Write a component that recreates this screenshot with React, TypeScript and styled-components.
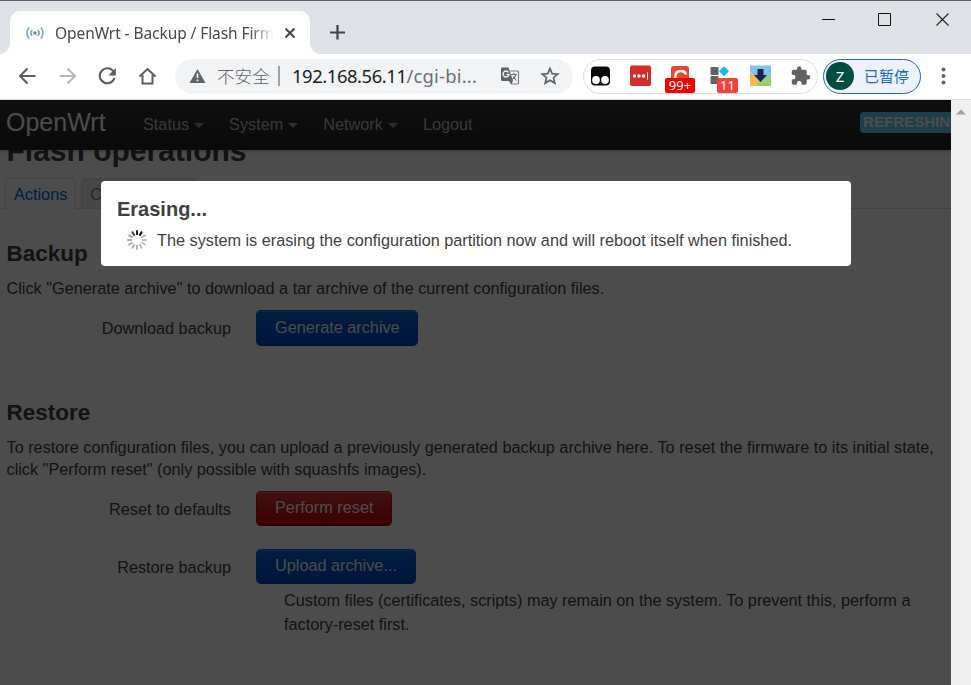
import React from "react";
import styled, { createGlobalStyle, css } from "styled-components";

const GlobalStyle = createGlobalStyle`
  * { box-sizing: border-box; }
  html, body, #root { margin: 0; height: 100%; }
  body { overflow: hidden; }
  svg { display: block; flex: none; }
`;

const chromeFont = css`
  font-family: "Noto Sans", "Noto Sans CJK SC", sans-serif;
`;

const Window = styled.div`
  display: flex;
  flex-direction: column;
  width: 971px;
  height: 685px;
  overflow: hidden;
  background: #fff;
`;

/* Browser frame */

const TabStrip = styled.div`
  display: flex;
  flex: none;
  height: 54px;
  border-top: 1px solid #626366;
  background: #dee1e6;
`;

const TabShape = styled.div`
  position: relative;
  display: flex;
  align-items: center;
  width: 300px;
  height: 43px;
  margin: 10px 0 0 10px;
  padding: 0 13px 0 16px;
  border-radius: 10px 10px 0 0;
  background: #fff;
  &::before,
  &::after {
    content: "";
    position: absolute;
    bottom: 0;
    width: 10px;
    height: 10px;
  }
  &::before {
    left: -10px;
    background: radial-gradient(circle at 0 0, #dee1e6 9.5px, #fff 10px);
  }
  &::after {
    right: -10px;
    background: radial-gradient(circle at 100% 0, #dee1e6 9.5px, #fff 10px);
  }
`;

const TabTitle = styled.div`
  ${chromeFont}
  width: 220px;
  margin-left: 11px;
  overflow: hidden;
  white-space: nowrap;
  font-size: 15.5px;
  letter-spacing: -0.08px;
  line-height: 24px;
  color: #45474a;
  mask-image: linear-gradient(90deg, #000 195px, transparent 219px);
`;

const TabClose = styled.svg`
  margin-left: 9px;
`;

const NewTab = styled.svg`
  margin: 22px 0 0 18px;
`;

const WindowButtons = styled.div`
  display: flex;
  gap: 42px;
  margin: 11px 21px 0 auto;
`;

const Toolbar = styled.div`
  display: flex;
  align-items: center;
  flex: none;
  height: 46px;
  padding-bottom: 1px;
  border-bottom: 1px solid #d9dadc;
  background: #fff;
`;

const NavIcons = styled.div`
  display: flex;
  gap: 16px;
  width: 175px;
  padding-left: 15px;
`;

const Omnibox = styled.div`
  ${chromeFont}
  display: flex;
  align-items: center;
  width: 398px;
  height: 35px;
  padding: 0 12px 0 14px;
  border-radius: 18px;
  background: #f1f3f4;
  white-space: nowrap;
`;

const Security = styled.span`
  width: 53px;
  margin-left: 11px;
  font-size: 17.6px;
  font-weight: 300;
  line-height: 30px;
  color: #606367;
`;

const Divider = styled.span`
  width: 2px;
  height: 20px;
  margin: 0 12px 0 8px;
  background: #a0a3a6;
`;

const Address = styled.span`
  width: 190px;
  font-size: 18.4px;
  letter-spacing: -0.42px;
  line-height: 30px;
  color: #202124;
`;

const AddressPath = styled.span`
  color: #6b6f74;
  letter-spacing: 0.2px;
`;

const OmniIcons = styled.div`
  display: flex;
  gap: 18px;
  margin-left: auto;
`;

const Extensions = styled.div`
  display: flex;
  gap: 10px;
  align-items: center;
  width: 235px;
  height: 35px;
  margin-left: 10px;
  padding-left: 1px;
  border: 1px solid #dcdde0;
  border-radius: 18px;
`;

const Extension = styled.div`
  position: relative;
  width: 30px;
  height: 30px;
`;

const Badge = styled.span<{ $wide?: boolean }>`
  ${chromeFont}
  position: absolute;
  top: 17px;
  left: ${(p) => (p.$wide ? 0 : 12)}px;
  width: ${(p) => (p.$wide ? 30 : 21)}px;
  height: 15px;
  border-radius: 2px;
  background: ${(p) => (p.$wide ? "#f90000" : "#f44336")};
  color: #fff;
  font-size: 13px;
  line-height: 15px;
  text-align: center;
`;

const Profile = styled.div`
  ${chromeFont}
  display: flex;
  align-items: center;
  width: 98px;
  height: 35px;
  margin-left: 5px;
  padding-left: 2px;
  border: 1px solid #1967d2;
  border-radius: 18px;
  background: #edf2fb;
  color: #1a66d2;
  font-size: 15px;
  line-height: 24px;
`;

const Avatar = styled.span`
  width: 28px;
  height: 28px;
  margin-right: 10px;
  border-radius: 50%;
  background: #004d40;
  color: #fff;
  font-size: 15px;
  line-height: 28px;
  text-align: center;
`;

const MoreMenu = styled.svg`
  margin-left: 18px;
`;

/* Web page */

const Viewport = styled.div`
  display: flex;
  flex: 1;
  min-height: 0;
`;

const Page = styled.div`
  position: relative;
  width: 951px;
  overflow: hidden;
  background: #fff;
  color: #404040;
  font: 16.25px/22.5px "Liberation Sans", Arial, sans-serif;
`;

const Scrollbar = styled.div`
  display: flex;
  justify-content: center;
  width: 20px;
  padding-top: 9px;
  background: #f0f0f0;
`;

const NavBar = styled.header`
  position: relative;
  z-index: 1;
  display: flex;
  align-items: center;
  height: 50px;
  padding-left: 6px;
  background: linear-gradient(#333, #222);
  box-shadow: 0 1px 4px rgba(0, 0, 0, 0.25);
  overflow: hidden;
  white-space: nowrap;
`;

const Brand = styled.span`
  width: 127px;
  padding-bottom: 6px;
  color: #fff;
  font-size: 25px;
  line-height: 30px;
`;

const Menu = styled.nav`
  display: flex;
  padding: 0 0 1px 10px;
  gap: 25px;
  color: #bfbfbf;
`;

const MenuItem = styled.span<{ $caret?: boolean }>`
  display: flex;
  align-items: center;
  ${(p) =>
    p.$caret &&
    css`
      &::after {
        content: "";
        margin: 2px 0 0 5px;
        border: 5px solid transparent;
        border-top-color: #999;
        border-bottom: 0;
      }
    `}
`;

const Refreshing = styled.span`
  height: 21px;
  margin: 0 0 5px auto;
  width: 91px;
  flex: none;
  padding-left: 3px;
  border-radius: 4px 0 0 4px;
  background: #62cffc;
  color: #fff;
  font-size: 15.1px;
  font-weight: bold;
  line-height: 20px;
  overflow: hidden;
`;

const Content = styled.main`
  padding: 0 6px 0 6.5px;
`;

const PageTitle = styled.h2`
  margin: -22px 0 5px;
  font-size: 30px;
  line-height: 45px;
`;

const Tabs = styled.div`
  display: flex;
  gap: 5px;
  height: 31px;
  margin: 0 -6px 0 -6.5px;
  padding-left: 5px;
  border-bottom: 1px solid #ddd;
`;

const PageTab = styled.div<{ $active?: boolean }>`
  height: 31px;
  padding: 0 8px;
  border: 1px solid #ddd;
  border-bottom-color: ${(p) => (p.$active ? "#fff" : "#ddd")};
  border-radius: 5px 5px 0 0;
  background: ${(p) => (p.$active ? "#fff" : "#eee")};
  color: ${(p) => (p.$active ? "#0069d6" : "#808080")};
  line-height: 31px;
`;

const Section = styled.section<{ $top: number }>`
  margin-top: ${(p) => p.$top}px;
`;

const SectionTitle = styled.h3`
  margin: 0;
  font-size: 22.5px;
  line-height: 44px;
  padding-bottom: 1px;
`;

const Paragraph = styled.p`
  margin: 0 0 10px;
`;

const Row = styled.div`
  display: grid;
  grid-template-columns: 224.5px 1fr;
  column-gap: 25px;
  margin-bottom: 23px;
`;

const Label = styled.div`
  padding-top: 7.4px;
  text-align: right;
`;

const Button = styled.button<{ $danger?: boolean; $tall?: boolean }>`
  display: block;
  height: ${(p) => (p.$tall ? 36 : 35)}px;
  padding: 0 ${(p) => (p.$tall ? 17.5 : 18)}px ${(p) => (p.$tall ? 1 : 2)}px 18px;
  border: 1px solid;
  border-color: ${(p) =>
    p.$danger ? "#b52525 #b01515 #960000" : "#0064cd #0058c5 #004099"};
  border-radius: 5px;
  background: ${(p) =>
    p.$danger
      ? "linear-gradient(#d53b3b, #c80000)"
      : "linear-gradient(#0069d6, #0044cc)"};
  color: #fff;
  font: inherit;
  text-shadow: 0 -1px 0 rgba(0, 0, 0, 0.25);
  box-shadow: inset 0 1px 0 rgba(255, 255, 255, 0.2);
`;

const Help = styled.div`
  padding: 4px 20px 0 28px;
  line-height: 24px;
`;

const Overlay = styled.div`
  position: absolute;
  z-index: 2;
  inset: 0;
  padding: 81px 100px 0 101px;
  background: rgba(0, 0, 0, 0.7);
`;

const Dialog = styled.div`
  height: 85px;
  padding: 14px 16px 0;
  border-radius: 4px;
  background: #fff;
`;

const DialogTitle = styled.h4`
  margin: 0;
  font-size: 20px;
  line-height: 29px;
`;

const DialogMessage = styled.p`
  display: flex;
  align-items: center;
  gap: 9px;
  margin: 5px 0 0 9px;
  white-space: nowrap;
`;

const Spinner = () => (
  <svg width="22" height="22" viewBox="-11 -11 22 22">
    {[0.95, 1, 0.32, 0.27, 0.27, 0.3, 0.32, 0.32, 0.35, 0.35, 0.42, 0.8].map((o, i) => (
      <line key={i} y1="-5" y2="-9.8" stroke="#111" strokeWidth="2" strokeOpacity={o} transform={`rotate(${i * 30})`} />
    ))}
  </svg>
);

export default function App() {
  return (
    <Window>
      <GlobalStyle />
      <TabStrip>
        <TabShape>
          <svg width="18" height="14" viewBox="0 0 18 14" fill="none" stroke="#7fa9bd" strokeWidth="1.7">
            <circle cx="9" cy="7" r="1.8" fill="#5d91aa" stroke="none" />
            <path d="M6 4Q3.8 7 6 10M12 4q2.2 3 0 6" />
            <path d="M3 1.500Q-1 7 3 12.500M15 1.500q4 5.500 0 11" />
          </svg>
          <TabTitle>OpenWrt - Backup / Flash Firm</TabTitle>
          <TabClose width="12" height="12" viewBox="0 0 12 12" stroke="#45474a" strokeWidth="2">
            <path d="M1.500 1.500l9 9m0-9l-9 9" />
          </TabClose>
        </TabShape>
        <NewTab width="18" height="18" viewBox="0 0 18 18" stroke="#3f4247" strokeWidth="2.200">
          <path d="M9.500 2v14.500M2 9.500h15" />
        </NewTab>
        <WindowButtons>
          <svg width="15" height="15" viewBox="0 0 15 15" stroke="#111"><path d="M1 7.500h13" /></svg>
          <svg width="15" height="15" viewBox="0 0 15 15" stroke="#111" fill="none"><path d="M.5 1.500h12v12h-12z" /></svg>
          <svg width="15" height="15" viewBox="0 0 15 15" stroke="#222" strokeWidth="1.100"><path d="M1.500 1.500l12 12m0-12l-12 12" /></svg>
        </WindowButtons>
      </TabStrip>

      <Toolbar>
        <NavIcons>
          <svg width="24" height="24" viewBox="0 0 24 24" fill="none" stroke="#5a5d61" strokeWidth="2">
            <path d="M20.500 12H5.500M12.500 4.500L5 12l7.500 7.500" />
          </svg>
          <svg width="24" height="24" viewBox="0 0 24 24" fill="none" stroke="#b8babc" strokeWidth="2">
            <path d="M4.500 12h15M12.500 4.500L20 12l-7.500 7.500" />
          </svg>
          <svg width="24" height="24" viewBox="0 0 24 24">
            <path d="M18.500 7.500A7.500 7.500 0 1 0 19.500 14" fill="none" stroke="#5a5d61" strokeWidth="2.100" />
            <path d="M20.800 4v7.500h-7.500z" fill="#5a5d61" />
          </svg>
          <svg width="24" height="24" viewBox="0 0 24 24" fill="none" stroke="#5a5d61" strokeWidth="2">
            <path d="M4.500 12.500L12.500 5l8 7.500M7.500 11v8.500h10V11" />
          </svg>
        </NavIcons>
        <Omnibox>
          <svg width="17" height="16" viewBox="0 0 17 16">
            <path d="M8.500 1l8 14h-16z" fill="#5f6368" />
            <path d="M8.500 5.500v4.500M8.500 11.500v1.800" stroke="#f1f3f4" strokeWidth="1.700" />
          </svg>
          <Security>不安全</Security>
          <Divider />
          <Address>
            192.168.56.11<AddressPath>/cgi-bi...</AddressPath>
          </Address>
          <OmniIcons>
            <svg width="22" height="22" viewBox="0 0 22 22">
              <path d="M10 6h8.500a1 1 0 0 1 1 1v11a1 1 0 0 1-1 1H12" fill="none" stroke="#7a7d81" strokeWidth="1.200" />
              <path d="M2.500 2.500h7l4.500 13.500H3.500a1.500 1.500 0 0 1-1.500-1.500V3.500z" fill="#5f6368" />
              <path d="M10 16h4l-2 3.500z" fill="#5f6368" />
              <path d="M9.500 7.300a3 3 0 1 0 .5 2.200H7.500" fill="none" stroke="#f1f3f4" strokeWidth="1.400" />
              <path d="M12 9.500h6M15 8v1.500M17 9.500q-1 3.500-4 5M14 11.500l3.500 4" fill="none" stroke="#6c7074" strokeWidth="1.100" />
            </svg>
            <svg width="22" height="22" viewBox="0 0 22 22" fill="none" stroke="#5f6368" strokeWidth="1.700">
              <path d="M11 3.500l2.200 5.100 5.500.5-4.200 3.600 1.300 5.400-4.800-2.900-4.800 2.900 1.300-5.400L3.300 9.100l5.500-.5z" />
            </svg>
          </OmniIcons>
        </Omnibox>
        <Extensions>
          <Extension>
            <svg width="30" height="30" viewBox="0 0 30 30">
              <rect x="6" y="5.500" width="19" height="19" rx="4" fill="#080808" />
              <circle cx="11" cy="19" r="3.900" fill="#fff" /><circle cx="20" cy="19" r="3.900" fill="#fff" />
            </svg>
          </Extension>
          <Extension>
            <svg width="30" height="30" viewBox="0 0 30 30">
              <rect x="5" y="4.500" width="21" height="20.500" rx="2" fill="#d32d2a" />
              <g fill="#fff"><circle cx="9.500" cy="15" r="1.700" /><circle cx="14" cy="15" r="1.700" /><circle cx="18.500" cy="15" r="1.700" /><path d="M22 11.500h1v7h-1z" /></g>
            </svg>
          </Extension>
          <Extension>
            <svg width="30" height="30" viewBox="0 0 30 30">
              <rect x="6" y="5" width="18" height="18" rx="3" fill="#e64a2e" />
              <path d="M10 17q0-7 6-7 4 0 5 3.500" fill="none" stroke="#fff" strokeWidth="2.500" />
            </svg>
            <Badge $wide>99+</Badge>
          </Extension>
          <Extension>
            <svg width="30" height="30" viewBox="0 0 30 30">
              <rect x="5.500" y="6" width="8" height="8" rx="1" fill="#5f6368" /><rect x="5.500" y="15" width="8" height="8" rx="1" fill="#5f6368" />
              <path d="M19 5.300l5 5-5 5-5-5z" fill="#12b9ef" />
            </svg>
            <Badge>11</Badge>
          </Extension>
          <Extension>
            <svg width="30" height="30" viewBox="0 0 30 30">
              <path d="M5 4.500h21V25H5z" fill="#7ac5ee" /><path d="M5 10.500l10 8-4.500 6.500H5z" fill="#fcb94e" />
              <path d="M10 25l5-7 11-3v10z" fill="#9bcf68" />
              <path d="M12.500 8h6v6H22l-6.500 7L9 14h3.500z" fill="#132550" />
            </svg>
          </Extension>
          <Extension>
            <svg width="30" height="30" viewBox="0 0 30 30">
              <path transform="translate(5 4.300) scale(.88)" d="M20.500 11H19V7a2 2 0 0 0-2-2h-4V3.500a2.500 2.500 0 0 0-5 0V5H4a2 2 0 0 0-2 2v3.800h1.500a2.700 2.700 0 0 1 0 5.400H2V20a2 2 0 0 0 2 2h3.800v-1.500a2.700 2.700 0 0 1 5.400 0V22H17a2 2 0 0 0 2-2v-4h1.500a2.500 2.500 0 0 0 0-5z" fill="#5f6368" />
            </svg>
          </Extension>
        </Extensions>
        <Profile><Avatar>Z</Avatar>已暂停</Profile>
        <MoreMenu width="10" height="20" viewBox="0 0 10 20" fill="#5f6368">
          <circle cx="4.500" cy="3.500" r="2" /><circle cx="4.500" cy="10" r="2" /><circle cx="4.500" cy="16.500" r="2" />
        </MoreMenu>
      </Toolbar>

      <Viewport>
        <Page>
          <NavBar>
            <Brand>OpenWrt</Brand>
            <Menu>
              <MenuItem $caret>Status</MenuItem>
              <MenuItem $caret>System</MenuItem>
              <MenuItem $caret>Network</MenuItem>
              <MenuItem>Logout</MenuItem>
            </Menu>
            <Refreshing>REFRESHING</Refreshing>
          </NavBar>
          <Content>
            <PageTitle>Flash operations</PageTitle>
            <Tabs>
              <PageTab $active>Actions</PageTab>
              <PageTab>Configuration</PageTab>
            </Tabs>
            <Section $top={23}>
              <SectionTitle>Backup</SectionTitle>
              <Paragraph>Click "Generate archive" to download a tar archive of the current configuration files.</Paragraph>
              <Row>
                <Label>Download backup</Label>
                <div><Button $tall>Generate archive</Button></div>
              </Row>
            </Section>
            <Section $top={45}>
              <SectionTitle>Restore</SectionTitle>
              <Paragraph>
                To restore configuration files, you can upload a previously generated backup archive here. To reset the
                firmware to its initial state, click "Perform reset" (only possible with squashfs images).
              </Paragraph>
              <Row>
                <Label>Reset to defaults</Label>
                <div><Button $danger>Perform reset</Button></div>
              </Row>
              <Row>
                <Label>Restore backup</Label>
                <div>
                  <Button>Upload archive...</Button>
                  <Help>
                    Custom files (certificates, scripts) may remain on the system. To prevent this, perform a
                    factory-reset first.
                  </Help>
                </div>
              </Row>
            </Section>
          </Content>
          <Overlay>
            <Dialog>
              <DialogTitle>Erasing...</DialogTitle>
              <DialogMessage>
                <Spinner />
                The system is erasing the configuration partition now and will reboot itself when finished.
              </DialogMessage>
            </Dialog>
          </Overlay>
        </Page>
        <Scrollbar>
          <svg width="10" height="6" viewBox="0 0 10 6"><path d="M0 5.500L5 .5l5 5z" fill="#a0a0a0" /></svg>
        </Scrollbar>
      </Viewport>
    </Window>
  );
}
